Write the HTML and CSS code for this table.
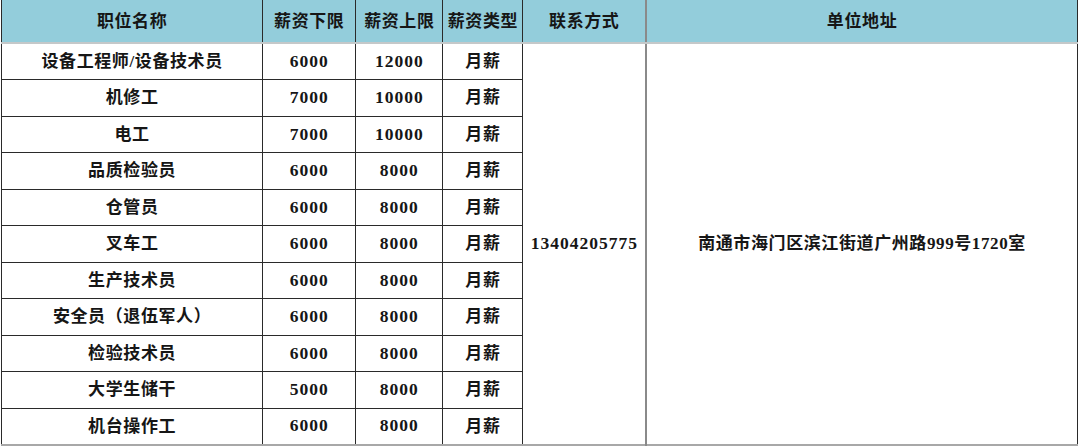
FILE: index.html
```html
<!DOCTYPE html>
<html lang="zh-CN">
<head>
<meta charset="utf-8">
<title>招聘岗位</title>
<link rel="stylesheet" href="styles.css">
</head>
<body>
<div class="wrap">
<table class="jobs">
  <colgroup>
    <col class="c1"><col class="c2"><col class="c3"><col class="c4"><col class="c5"><col class="c6">
  </colgroup>
  <thead>
    <tr>
      <th>职位名称</th><th>薪资下限</th><th>薪资上限</th><th>薪资类型</th><th>联系方式</th><th class="addr">单位地址</th>
    </tr>
  </thead>
  <tbody>
    <tr><td>设备工程师/设备技术员</td><td class="num">6000</td><td class="num">12000</td><td>月薪</td><td class="num contact" rowspan="11">13404205775</td><td class="addr" rowspan="11">南通市海门区滨江街道广州路999号1720室</td></tr>
    <tr><td>机修工</td><td class="num">7000</td><td class="num">10000</td><td>月薪</td></tr>
    <tr><td>电工</td><td class="num">7000</td><td class="num">10000</td><td>月薪</td></tr>
    <tr><td>品质检验员</td><td class="num">6000</td><td class="num">8000</td><td>月薪</td></tr>
    <tr><td>仓管员</td><td class="num">6000</td><td class="num">8000</td><td>月薪</td></tr>
    <tr><td>叉车工</td><td class="num">6000</td><td class="num">8000</td><td>月薪</td></tr>
    <tr><td>生产技术员</td><td class="num">6000</td><td class="num">8000</td><td>月薪</td></tr>
    <tr><td>安全员（退伍军人）</td><td class="num">6000</td><td class="num">8000</td><td>月薪</td></tr>
    <tr><td>检验技术员</td><td class="num">6000</td><td class="num">8000</td><td>月薪</td></tr>
    <tr><td>大学生储干</td><td class="num">5000</td><td class="num">8000</td><td>月薪</td></tr>
    <tr><td>机台操作工</td><td class="num">6000</td><td class="num">8000</td><td>月薪</td></tr>
  </tbody>
</table>
</div>
</body>
</html>
```
FILE: styles.css
```css
html, body {
  margin: 0;
  padding: 0;
  background: #ffffff;
}
.wrap {
  padding-left: 1px;
}
.jobs {
  border-collapse: collapse;
  table-layout: fixed;
  width: 1077px;
  font-family: "Liberation Serif", "Noto Sans CJK SC", serif;
  font-size: 17px;
  font-weight: bold;
  letter-spacing: 0.6px;
  color: #161616;
  border-left: 1px solid #333;
  border-right: 1px solid #444;
  border-bottom: 2px solid #a8a8a8;
}
.c1 { width: 261px; }
.c2 { width: 93px; }
.c3 { width: 87px; }
.c4 { width: 80px; }
.c5 { width: 123px; }
.c6 { width: 431px; }
.jobs th, .jobs td {
  padding: 0;
  text-align: center;
  vertical-align: middle;
  border: 1px solid #2a2a2a;
  line-height: 1;
  white-space: nowrap;
}
.jobs thead th {
  background: #93cddb;
  height: 41px;
  border-top: none;
  border-bottom: 2px solid #c4c8c9;
  padding-top: 1px;
}
.jobs thead th.addr, .jobs td.addr {
  border-left: 2px solid #8a8a8a;
}
.jobs tbody tr {
  height: 36.5px;
}
.jobs td.num {
  font-size: 17.5px;
  letter-spacing: 1px;
}
```
